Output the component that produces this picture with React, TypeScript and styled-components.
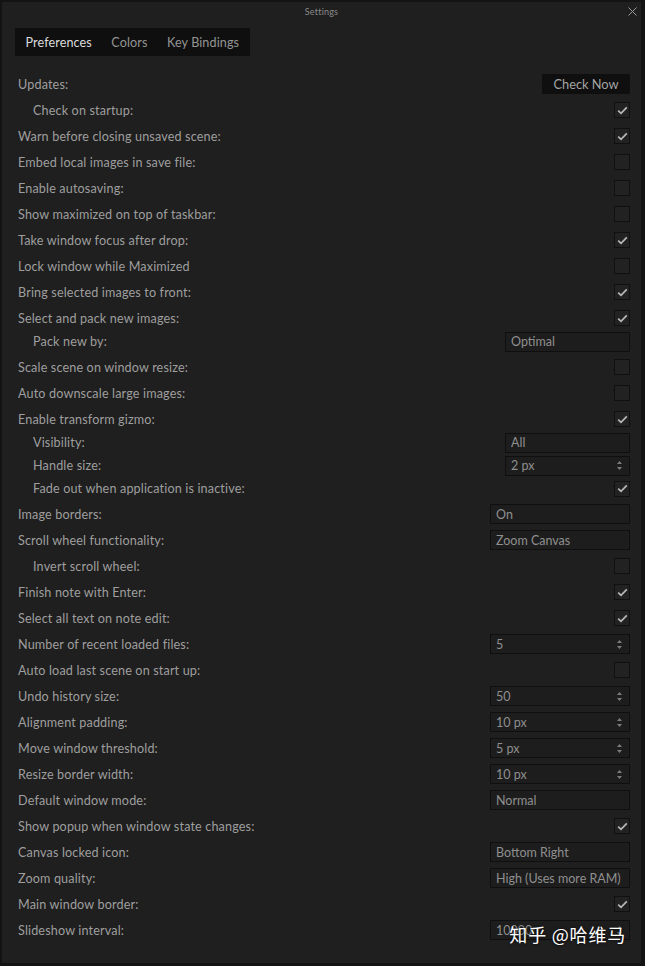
import React from "react";
import styled, { createGlobalStyle } from "styled-components";

const GlobalStyle = createGlobalStyle`
    html, body {
        margin: 0;
        padding: 0;
        background: #141414;
    }
    body {
        font-family: "Lato", "Open Sans", sans-serif;
    }
`;

const Window = styled.div`
    position: relative;
    box-sizing: border-box;
    width: 645px;
    height: 966px;
    background: #1f1f1f;
    border: 2px solid #131313;
    border-right-width: 4px;
    border-bottom-width: 3px;
    display: flex;
    flex-direction: column;
`;

const TitleBar = styled.div`
    height: 18px;
    display: flex;
    align-items: center;
    justify-content: center;
    position: relative;
    font-size: 9px;
    color: #8a8a8a;
    letter-spacing: 0.2px;
`;

const CloseButton = styled.div`
    position: absolute;
    right: 3px;
    top: 3px;
    width: 12px;
    height: 12px;
    display: flex;
    align-items: center;
    justify-content: center;
`;

const TabBar = styled.div`
    align-self: flex-start;
    margin: 8px 0 0 13px;
    height: 28px;
    display: flex;
    align-items: center;
    background: #0f0f0f;
    padding: 0 1px;
`;

const Tab = styled.div<{ $active?: boolean }>`
    padding: 0 10px 0 9.5px;
    font-size: 12.6px;
    letter-spacing: 0.1px;
    color: ${(p) => (p.$active ? "#dcdcdc" : "#949494")};
`;

const List = styled.div`
    display: flex;
    flex-direction: column;
    margin-top: 15px;
    padding: 0 11px 0 16px;
`;

const Row = styled.div<{ $compact?: boolean }>`
    height: ${(p) => (p.$compact ? 23 : 26)}px;
    display: flex;
    align-items: center;
    justify-content: space-between;
    margin-top: ${(p) => (p.$compact ? -1 : 0)}px;
    margin-bottom: ${(p) => (p.$compact ? 1 : 0)}px;
`;

const Label = styled.span<{ $indent?: boolean }>`
    font-size: 12.6px;
    letter-spacing: 0.15px;
    color: #9e9e9e;
    padding-left: ${(p) => (p.$indent ? 15 : 0)}px;
    white-space: nowrap;
`;

const Box = styled.div`
    box-sizing: border-box;
    width: 16px;
    height: 16px;
    border: 1px solid #101010;
    background: #222;
    display: flex;
    align-items: center;
    justify-content: center;
`;

const Field = styled.div<{ $narrow?: boolean }>`
    box-sizing: border-box;
    width: ${(p) => (p.$narrow ? 125 : 140)}px;
    height: 20px;
    border: 1px solid #0f0f0f;
    background: #1d1d1d;
    display: flex;
    align-items: center;
    justify-content: space-between;
    padding: 0 5px 0 5px;
    font-size: 12.5px;
    color: #8f8f8f;
    white-space: nowrap;
    overflow: hidden;
`;

const Spin = styled.div`
    display: flex;
    flex-direction: column;
    align-items: center;
    gap: 3px;
    padding-right: 2px;
`;

const Button = styled.div`
    box-sizing: border-box;
    width: 88px;
    height: 20px;
    background: #0f0f0f;
    display: flex;
    align-items: center;
    justify-content: center;
    font-size: 12.8px;
    color: #a4a4a4;
`;

const Watermark = styled.div`
    position: absolute;
    right: 15px;
    bottom: 16px;
    font-family: "Noto Sans CJK SC", sans-serif;
    font-size: 18px;
    color: #ffffff;
    text-shadow: 0 0 3px rgba(0, 0, 0, 0.9);
    letter-spacing: 0.8px;
`;

function Check({ on }: { on?: boolean }) {
    return (
        <Box>
            {on && (
                <svg width="11" height="9" viewBox="0 0 11 9">
                    <path d="M1.2 4.6 L4 7.3 L9.8 1.4" stroke="#b8b8b8" strokeWidth="1.7" fill="none" />
                </svg>
            )}
        </Box>
    );
}

function SpinArrows() {
    return (
        <Spin>
            <svg width="5" height="3" viewBox="0 0 5 3"><path d="M0 3 L2.5 0 L5 3 Z" fill="#7c7c7c" /></svg>
            <svg width="5" height="3" viewBox="0 0 5 3"><path d="M0 0 L2.5 3 L5 0 Z" fill="#7c7c7c" /></svg>
        </Spin>
    );
}

type Item = {
    label: string;
    indent?: boolean;
    compact?: boolean;
    check?: boolean;
    text?: string;
    spin?: boolean;
    narrow?: boolean;
    button?: string;
};

const items: Item[] = [
    { label: "Updates:", button: "Check Now" },
    { label: "Check on startup:", indent: true, check: true },
    { label: "Warn before closing unsaved scene:", check: true },
    { label: "Embed local images in save file:", check: false },
    { label: "Enable autosaving:", check: false },
    { label: "Show maximized on top of taskbar:", check: false },
    { label: "Take window focus after drop:", check: true },
    { label: "Lock window while Maximized", check: false },
    { label: "Bring selected images to front:", check: true },
    { label: "Select and pack new images:", check: true },
    { label: "Pack new by:", indent: true, compact: true, text: "Optimal", narrow: true },
    { label: "Scale scene on window resize:", check: false },
    { label: "Auto downscale large images:", check: false },
    { label: "Enable transform gizmo:", check: true },
    { label: "Visibility:", indent: true, compact: true, text: "All", narrow: true },
    { label: "Handle size:", indent: true, compact: true, text: "2 px", narrow: true, spin: true },
    { label: "Fade out when application is inactive:", indent: true, compact: true, check: true },
    { label: "Image borders:", text: "On" },
    { label: "Scroll wheel functionality:", text: "Zoom Canvas" },
    { label: "Invert scroll wheel:", indent: true, check: false },
    { label: "Finish note with Enter:", check: true },
    { label: "Select all text on note edit:", check: true },
    { label: "Number of recent loaded files:", text: "5", spin: true },
    { label: "Auto load last scene on start up:", check: false },
    { label: "Undo history size:", text: "50", spin: true },
    { label: "Alignment padding:", text: "10 px", spin: true },
    { label: "Move window threshold:", text: "5 px", spin: true },
    { label: "Resize border width:", text: "10 px", spin: true },
    { label: "Default window mode:", text: "Normal" },
    { label: "Show popup when window state changes:", check: true },
    { label: "Canvas locked icon:", text: "Bottom Right" },
    { label: "Zoom quality:", text: "High (Uses more RAM)" },
    { label: "Main window border:", check: true },
    { label: "Slideshow interval:", text: "10000", spin: true },
];

function Control({ item }: { item: Item }) {
    if (item.button) return <Button>{item.button}</Button>;
    if (item.text !== undefined) {
        return (
            <Field $narrow={item.narrow}>
                <span>{item.text}</span>
                {item.spin && <SpinArrows />}
            </Field>
        );
    }
    return <Check on={item.check} />;
}

export default function App() {
    return (
        <>
            <GlobalStyle />
            <Window>
                <TitleBar>
                    Settings
                    <CloseButton>
                        <svg width="9" height="9" viewBox="0 0 9 9">
                            <path d="M0.5 0.5 L8.5 8.5 M8.5 0.5 L0.5 8.5" stroke="#9a9a9a" strokeWidth="1" />
                        </svg>
                    </CloseButton>
                </TitleBar>
                <TabBar>
                    <Tab $active>Preferences</Tab>
                    <Tab>Colors</Tab>
                    <Tab>Key Bindings</Tab>
                </TabBar>
                <List>
                    {items.map((item) => (
                        <Row key={item.label} $compact={item.compact}>
                            <Label $indent={item.indent}>{item.label}</Label>
                            <Control item={item} />
                        </Row>
                    ))}
                </List>
                <Watermark>知乎 @哈维马</Watermark>
            </Window>
        </>
    );
}
